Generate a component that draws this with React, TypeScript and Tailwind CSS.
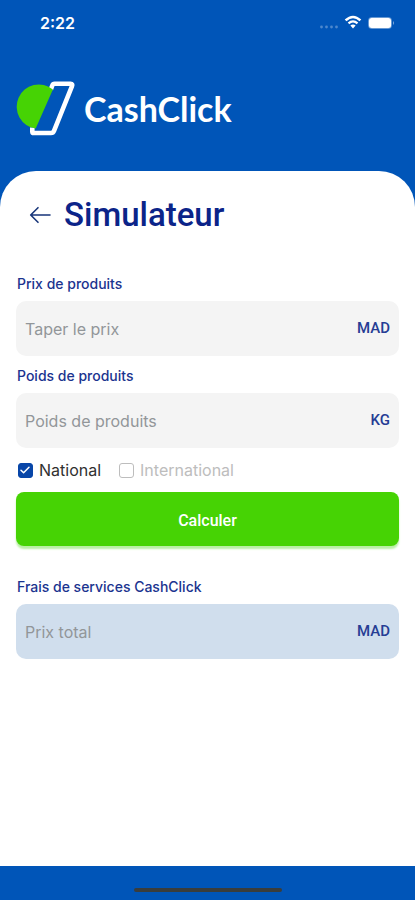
import React, { useState } from 'react';

type FieldProps = {
  id: string;
  label: string;
  placeholder: string;
  unit: string;
  value: string;
  onChange?: (value: string) => void;
  readOnly?: boolean;
};

export default function App() {
  const [price, setPrice] = useState('');
  const [weight, setWeight] = useState('');
  const [zone, setZone] = useState('national');
  const [total, setTotal] = useState('');

  const handleSubmit = (e: React.FormEvent) => {
    e.preventDefault();
    if (!price || !weight) return;
    const rate = zone === 'national' ? 10 : 45;
    setTotal((Number(price) * 0.02 + Number(weight) * rate).toFixed(2));
  };

  return (
    <div className="min-h-screen flex flex-col bg-[#0055b8] font-['Inter',sans-serif]">
      {/* Status bar */}
      <div className="flex items-center justify-between h-[46px] pl-10 pr-5 text-white">
        <span className="text-base leading-6 font-semibold">2:22</span>
        <StatusIcons />
      </div>

      {/* Brand */}
      <header className="flex items-center gap-2 px-4 pt-[35px] pb-[34px]">
        <Logo />
        <span className="font-['Lato',sans-serif] text-[34px] leading-8 font-bold text-white">CashClick</span>
      </header>

      <main className="grow bg-white rounded-t-[36px] px-4 pt-6 pb-6">
        <div className="flex items-center gap-3 pl-3">
          <button type="button" aria-label="Retour" className="cursor-pointer">
            <BackArrow />
          </button>
          <h1 className="font-['Roboto',sans-serif] text-[33px] leading-10 font-medium text-[#0b2489]">Simulateur</h1>
        </div>

        <form onSubmit={handleSubmit} className="pt-10">
          <div className="space-y-[11px]">
            <Field id="price" label="Prix de produits" placeholder="Taper le prix" unit="MAD" value={price} onChange={setPrice} />
            <Field id="weight" label="Poids de produits" placeholder="Poids de produits" unit="KG" value={weight} onChange={setWeight} />
          </div>

          <div className="flex items-center gap-4 h-11">
            <Choice label="National" checked={zone === 'national'} onSelect={() => setZone('national')} />
            <Choice label="International" checked={zone === 'international'} onSelect={() => setZone('international')} />
          </div>

          <button
            type="submit"
            className="w-full h-[54px] mb-8 pt-1 rounded-lg bg-[#46d304] shadow-[0_3px_2px_#b9efa4] font-['Roboto',sans-serif] text-base font-medium text-white cursor-pointer"
          >
            Calculer
          </button>

          <Field id="total" label="Frais de services CashClick" placeholder="Prix total" unit="MAD" value={total} readOnly />
        </form>
      </main>

      {/* Home indicator */}
      <div className="flex justify-center h-[34px] pt-[22px]">
        <div className="w-[148px] h-1 rounded-full bg-[#3a3d3c]" />
      </div>
    </div>
  );
}

function Field({ id, label, placeholder, unit, value, onChange, readOnly }: FieldProps) {
  return (
    <div>
      <label htmlFor={id} className="block mb-2 pl-px text-sm leading-[18px] font-medium text-[#1b348f]">{label}</label>
      <div className={`flex items-center h-[55px] px-[9px] rounded-[10px] ${readOnly ? 'bg-[#d0deed]' : 'bg-[#f4f4f4]'}`}>
        <input
          id={id}
          type="text"
          inputMode="decimal"
          placeholder={placeholder}
          value={value}
          readOnly={readOnly}
          onChange={(e) => onChange?.(e.target.value)}
          className="grow min-w-0 bg-transparent outline-none text-base text-slate-700 placeholder:text-[#929699]"
        />
        <span className="font-['Roboto',sans-serif] text-[15px] font-medium text-[#263d94]">{unit}</span>
      </div>
    </div>
  );
}

function Choice({ label, checked, onSelect }: { label: string; checked: boolean; onSelect: () => void }) {
  return (
    <label className={`flex items-center gap-[5px] text-base cursor-pointer ${checked ? 'text-[#303030]' : 'text-[#bdbdbd]'}`}>
      <span className="grid place-items-center w-[18px]">
        <input
          type="checkbox"
          checked={checked}
          onChange={onSelect}
          className="col-start-1 row-start-1 appearance-none size-[15px] rounded-[3px] border border-[#bdbdbd] checked:border-[#0846a8] checked:bg-[#0846a8]"
        />
        {checked && (
          <svg viewBox="0 0 16 16" className="col-start-1 row-start-1 size-4 pointer-events-none" fill="none" stroke="white" strokeWidth="1.5" strokeLinecap="round" strokeLinejoin="round">
            <path d="M4 8.2l2.6 2.6L12 5.2" />
          </svg>
        )}
      </span>
      {label}
    </label>
  );
}

function Logo() {
  return (
    <svg viewBox="0 0 60 56" className="w-[60px] h-14" fill="none">
      <path d="M34.8 8.6L36.3 4.4Q36.9 2.8 38.6 2.8H54.6Q57 2.8 56 5.1L38 49.9Q37.2 52 35 52H17.8Q16.3 52 16.3 50.4V46.5" stroke="white" strokeWidth="4.6" strokeLinejoin="round" />
      <path d="M36.9 8.4A22.2 22.2 0 1 0 19.7 47.6Z" fill="#46d304" />
    </svg>
  );
}

function BackArrow() {
  return (
    <svg viewBox="0 0 24 24" className="size-6" fill="none" stroke="#173579" strokeWidth="1.6" strokeLinecap="round" strokeLinejoin="round">
      <path d="M22 12H3M10 4.7L2.7 12l7.3 7.3" />
    </svg>
  );
}

function StatusIcons() {
  return (
    <svg viewBox="0 0 76 16" className="w-[76px] h-4" fill="none">
      <g fill="white" fillOpacity="0.3">
        <circle cx="2.5" cy="12" r="1.4" />
        <circle cx="7.5" cy="12" r="1.4" />
        <circle cx="12.5" cy="12" r="1.4" />
        <circle cx="17.5" cy="12" r="1.4" />
      </g>
      <path d="M26.6 5.4Q34 -1.4 41.4 5.4" stroke="white" strokeWidth="2.6" />
      <path d="M29.5 8.4Q34 4.2 38.5 8.4" stroke="white" strokeWidth="2.2" />
      <path d="M31.4 10.6Q34 8.2 36.6 10.6L34 13.4Z" fill="white" />
      <rect x="49.5" y="2.5" width="23" height="11" rx="3" stroke="white" strokeOpacity="0.4" />
      <rect x="50" y="3" width="22" height="10" rx="2.5" fill="white" />
      <path d="M74 6Q76 8 74 10Z" fill="white" fillOpacity="0.5" />
    </svg>
  );
}
